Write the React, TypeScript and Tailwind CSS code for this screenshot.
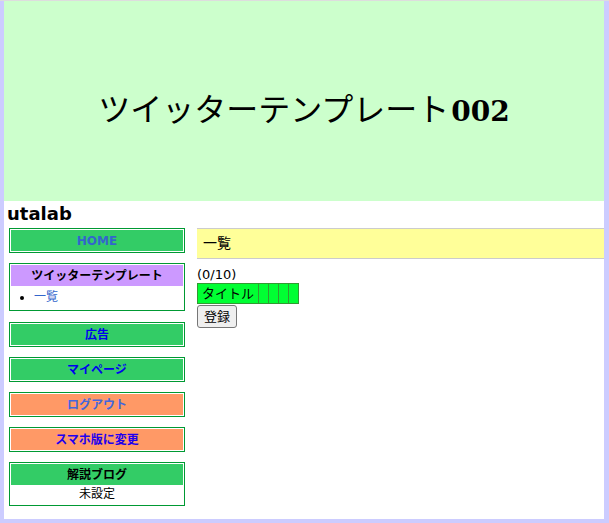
import React from "react";

const FONT = { fontFamily: '"DejaVu Sans", "Noto Sans CJK JP", sans-serif' };

// サイドメニューのボタン
const MENU = [
  { label: "広告", bg: "bg-[#33cc66]", color: "text-[#0000ee]" },
  { label: "マイページ", bg: "bg-[#33cc66]", color: "text-[#0000ee]" },
  { label: "ログアウト", bg: "bg-[#ff9966]", color: "text-[#4466dd]" },
  { label: "スマホ版に変更", bg: "bg-[#ff9966]", color: "text-[#2200ee]" },
];

function MenuBox({ label, bg, color }: { label: string; bg: string; color: string }) {
  return (
    <div className="border border-[#009933] p-px mb-[10px]">
      <div className={`${bg} h-[21px] leading-[22px] text-center text-[12px] font-bold`}>
        <a href="#" className={color}>
          {label}
        </a>
      </div>
    </div>
  );
}

export default function App() {
  return (
    <div
      className="min-h-screen bg-[#ccccff] border-t border-[#dddddd] pl-[4px] pr-[5px] pb-[4px] text-black"
      style={FONT}
    >
      <div className="bg-white pb-[3px]">
        {/* ヘッダー */}
        <div className="h-[200px] bg-[#ccffcc] flex items-center justify-center pt-[18px]">
          <h1
            className="text-[32px] font-normal leading-none whitespace-nowrap"
            style={{ fontFamily: '"DejaVu Serif", "Noto Sans CJK JP", serif' }}
          >
            ツイッターテンプレート<span className="font-bold text-[28px] ml-[2px]">002</span>
          </h1>
        </div>

        <div className="h-[26px] leading-[26px] pl-[3px] text-[18px] font-bold">utalab</div>

        <div className="flex mt-px">
          {/* サイドバー */}
          <div className="w-[176px] ml-[5px] shrink-0">
            <div className="border border-[#009933] p-px mb-[10px]">
              <div className="bg-[#33cc66] h-[21px] leading-[22px] text-center text-[12px] font-bold">
                <a href="#" className="text-[#3366cc]">
                  HOME
                </a>
              </div>
            </div>

            <div className="border border-[#009933] px-px pt-px mb-[11px]">
              <div className="bg-[#cc99ff] h-[21px] leading-[22px] text-center text-[12px] font-bold">
                ツイッターテンプレート
              </div>
              <ul className="list-disc pl-[23px] h-[24px] leading-[23px] text-[12px]">
                <li>
                  <a href="#" className="text-[#3366cc]">
                    一覧
                  </a>
                </li>
              </ul>
            </div>

            {MENU.map((m) => (
              <MenuBox key={m.label} {...m} />
            ))}

            <div className="border border-[#009933] px-px pt-px mb-[10px]">
              <div className="bg-[#33cc66] h-[21px] leading-[22px] text-center text-[12px] font-bold">
                解説ブログ
              </div>
              <div className="h-[20px] leading-[19px] text-center text-[12px]">未設定</div>
            </div>
          </div>

          {/* メイン */}
          <div className="flex-1 ml-[12px]">
            <div className="bg-[#ffff99] border-y border-[#cccccc] h-[31px] leading-[29px] pl-[6px] text-[14px]">
              一覧
            </div>
            <div className="mt-[7px] leading-[17px] text-[13px]">(0/10)</div>
            <table className="border-collapse text-[13px]">
              <tbody>
                <tr className="bg-[#00ff33] h-[20px]">
                  <td className="border border-[#339933] px-[4px] leading-[17px]">タイトル</td>
                  <td className="border border-[#339933] w-[10px]"></td>
                  <td className="border border-[#339933] w-[10px]"></td>
                  <td className="border border-[#339933] w-[10px]"></td>
                  <td className="border border-[#339933] w-[10px]"></td>
                </tr>
              </tbody>
            </table>
            <button className="mt-px h-[23px] px-[6px] border border-[#767676] rounded-[3px] bg-[#efefef] text-[13px] leading-[17px]">
              登録
            </button>
          </div>
        </div>
      </div>
    </div>
  );
}
